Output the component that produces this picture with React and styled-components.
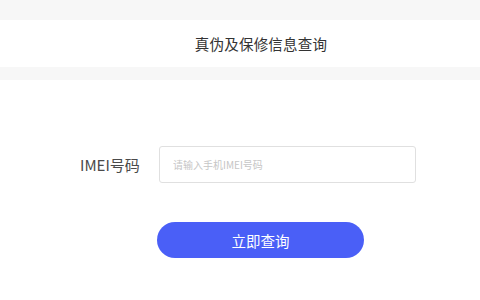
import styled, { createGlobalStyle } from 'styled-components';

const GlobalStyle = createGlobalStyle`
  html, body {
    margin: 0;
    padding: 0;
    background: #ffffff;
    font-family: "Noto Sans CJK SC", "Noto Sans", sans-serif;
  }
`;

const Page = styled.div`
  width: 480px;
  height: 300px;
  background: #ffffff;
  overflow: hidden;
`;

const Band = styled.div`
  height: ${(props) => props.h}px;
  background: #f7f7f7;
`;

const Header = styled.header`
  height: 47px;
  display: flex;
  align-items: center;
  justify-content: center;
  padding-left: 42px;
  font-size: 14.5px;
  color: #333333;
  letter-spacing: 0.2px;
`;

const Form = styled.form`
  display: flex;
  flex-direction: column;
  padding-top: 66px;
`;

const Row = styled.div`
  display: flex;
  align-items: center;
  padding-left: 80px;
`;

const Label = styled.label`
  font-size: 15px;
  color: #4a4a4a;
  width: 79px;
`;

const Input = styled.input`
  box-sizing: border-box;
  width: 257px;
  height: 37px;
  border: 1px solid #e0e0e0;
  border-radius: 3px;
  padding: 0 13px;
  font-family: inherit;
  font-size: 10px;
  color: #333;
  outline: none;

  &::placeholder {
    color: #c6c6c6;
  }
`;

const Button = styled.button`
  margin: 39px 0 0 157px;
  width: 207px;
  height: 36px;
  border: none;
  border-radius: 18px;
  background: #4a5ff7;
  color: #ffffff;
  font-family: inherit;
  font-size: 14.5px;
  cursor: pointer;
`;

export default function App() {
  return (
    <Page>
      <GlobalStyle />
      <Band h={20} />
      <Header>真伪及保修信息查询</Header>
      <Band h={13} />
      <Form onSubmit={(e) => e.preventDefault()}>
        <Row>
          <Label htmlFor="imei">IMEI号码</Label>
          <Input id="imei" placeholder="请输入手机IMEI号码" />
        </Row>
        <Button type="submit">立即查询</Button>
      </Form>
    </Page>
  );
}
